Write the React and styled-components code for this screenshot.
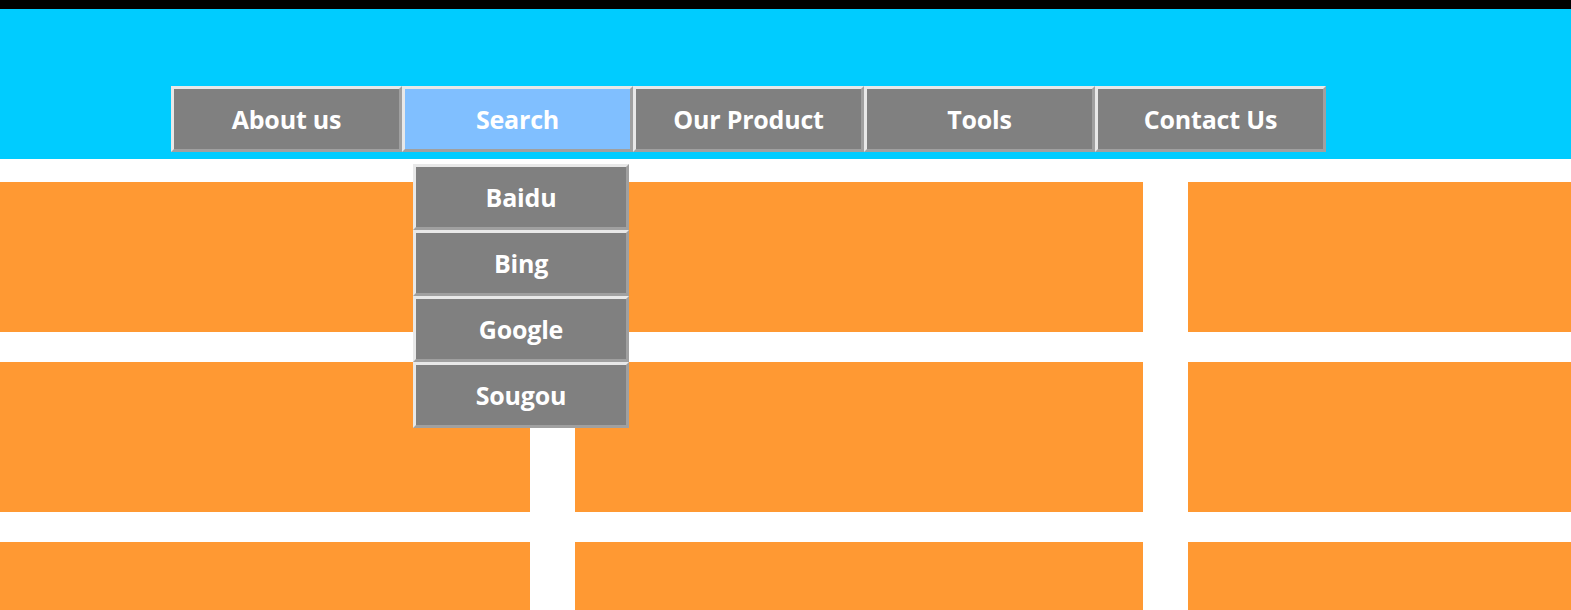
import React from 'react';
import styled, { createGlobalStyle } from 'styled-components';

const GlobalStyle = createGlobalStyle`
  html, body {
    margin: 0;
    padding: 0;
    background: #fff;
    overflow: hidden;
  }
  body {
    font-family: "Open Sans", "Noto Sans", sans-serif;
  }
`

const TopBar = styled.div`
  height: 9px;
  background: #000;
`
const Header = styled.header`
  height: 150px;
  background: #00ccff;
  box-sizing: border-box;
  padding: 77px 0 0 171px;
`
const Nav = styled.ul`
  display: flex;
  margin: 0;
  padding: 0;
  list-style: none;
`
const NavItem = styled.li`
  position: relative;
`
const Button = styled.a`
  display: flex;
  align-items: center;
  justify-content: center;
  box-sizing: border-box;
  width: ${p => p.$w || 231}px;
  height: 66px;
  border: 3px solid;
  border-color: #e8e8e8 #a0a0a0 #a0a0a0 #e8e8e8;
  background: ${p => (p.$active ? '#80bfff' : '#808080')};
  color: #fff;
  font-size: 25px;
  font-weight: 700;
  letter-spacing: -0.2px;
  text-decoration: none;
`
const Dropdown = styled.ul`
  position: absolute;
  top: 78px;
  left: 11px;
  margin: 0;
  padding: 0;
  list-style: none;
  z-index: 5;
`
const Grid = styled.main`
  display: grid;
  grid-template-columns: 530px 568px 1fr;
  grid-auto-rows: 150px;
  column-gap: 45px;
  row-gap: 30px;
  margin-top: 23px;
`
const Cell = styled.div`
  background: #ff9933;
`

const menu = ['About us', 'Search', 'Our Product', 'Tools', 'Contact Us'];
const engines = ['Baidu', 'Bing', 'Google', 'Sougou'];

function App() {
  return (
    <>
      <GlobalStyle />
      <TopBar />
      <Header>
        <Nav>
          {menu.map(m => (
            <NavItem key={m}>
              <Button $active={m === 'Search'}>{m}</Button>
              {m === 'Search' && (
                <Dropdown>
                  {engines.map(e => (
                    <li key={e}><Button $w={216}>{e}</Button></li>
                  ))}
                </Dropdown>
              )}
            </NavItem>
          ))}
        </Nav>
      </Header>
      <Grid>
        {Array.from({ length: 9 }).map((_, i) => <Cell key={i} />)}
      </Grid>
    </>
  )
}

export default App;
